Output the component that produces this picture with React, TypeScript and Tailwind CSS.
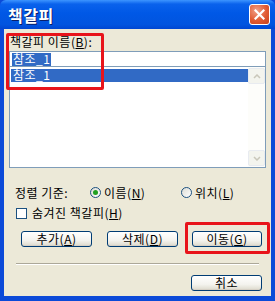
import React from 'react';

const font = { fontFamily: '"Noto Sans CJK KR", "Liberation Sans", sans-serif' };

const XpButton: React.FC<{ label: string; mnemonic?: string; className?: string }> = ({ label, mnemonic, className }) => (
  <div
    className={`h-[16px] flex items-center justify-center rounded-[3px] border border-[#003c74] bg-[linear-gradient(180deg,#ffffff_0%,#f4f3ee_60%,#dcd9cc_100%)] text-[12px] leading-none text-black shadow-[inset_0_-1px_0_#d6d0c5] ${className ?? ''}`}
  >
    {label}
    {mnemonic && (
      <>
        (<span className="underline">{mnemonic}</span>)
      </>
    )}
  </div>
);

const Radio: React.FC<{ checked?: boolean }> = ({ checked }) => (
  <div className="w-[11px] h-[11px] rounded-full border border-[#1c5180] bg-[linear-gradient(135deg,#dcdcd4,#ffffff)] flex items-center justify-center">
    {checked && <div className="w-[5px] h-[5px] rounded-full bg-[#21a121]" />}
  </div>
);

const ScrollArrow: React.FC<{ up?: boolean }> = ({ up }) => (
  <div className="h-[16px] w-full rounded-[2px] border border-[#e8ebf0] bg-[#f3f4ee] flex items-center justify-center">
    <svg width="8" height="5" viewBox="0 0 8 5">
      <path d={up ? 'M1 4 L4 1 L7 4' : 'M1 1 L4 4 L7 1'} fill="none" stroke="#c9c7ba" strokeWidth="1.5" />
    </svg>
  </div>
);

export default function App() {
  return (
    <div className="w-[275px] h-[301px] flex flex-col bg-[#0b4ad8] overflow-hidden" style={font}>
      {/* title bar */}
      <div className="h-[29px] shrink-0 flex items-center justify-between pl-[8px] pr-[5px] rounded-t-[6px] bg-[linear-gradient(180deg,#3d95ff_0%,#0a62ec_14%,#0058e6_45%,#0154df_85%,#0046d2_100%)]">
        <span className="text-white font-bold text-[16px] leading-none tracking-[0.5px] [text-shadow:1px_1px_0_#0a1e6a]">책갈피</span>
        <div className="w-[21px] h-[21px] rounded-[3px] border border-white bg-[radial-gradient(circle_at_35%_30%,#f0a088,#e15a32_55%,#c8411c)] flex items-center justify-center">
          <svg width="11" height="11" viewBox="0 0 11 11">
            <path d="M1.5 1.5 L9.5 9.5 M9.5 1.5 L1.5 9.5" stroke="#fff" strokeWidth="2.2" strokeLinecap="square" />
          </svg>
        </div>
      </div>

      {/* body */}
      <div className="relative flex-1 mx-[4px] mb-[5px] bg-[#ece9d8] flex flex-col text-[12px] leading-none tracking-[0.5px] text-black">
        <div className="pl-[6px] pt-[7px] h-[22px]">
          책갈피 이름(<span className="underline">B</span>):
        </div>
        <div className="mx-[5px] h-[16px] border border-[#7f9db9] bg-white flex items-center pl-[2px]">
          <span className="inline-block h-[13px] bg-[#316ac5] text-white px-[1px] leading-[11px]">참조_1</span>
        </div>
        <div className="mx-[5px] h-[101px] border border-[#7f9db9] border-t-0 bg-white flex">
          <div className="flex-1 pt-[2px] pl-[1px]">
            <div className="h-[13px] bg-[#316ac5] text-white pl-[2px] leading-[11px]">참조_1</div>
          </div>
          <div className="w-[17px] flex flex-col justify-between bg-[#fdfdfa] py-[1px]">
            <ScrollArrow up />
            <ScrollArrow />
          </div>
        </div>

        <div className="flex items-center mt-[18px] h-[13px] pl-[11px]">
          <span className="w-[75px]">정렬 기준:</span>
          <Radio checked />
          <span className="ml-[3px] w-[77px]">
            이름(<span className="underline">N</span>)
          </span>
          <Radio />
          <span className="ml-[3px]">
            위치(<span className="underline">L</span>)
          </span>
        </div>

        <div className="flex items-center mt-[8px] h-[12px] pl-[12px]">
          <div className="w-[11px] h-[11px] border border-[#1c5180] bg-white" />
          <span className="ml-[5px]">
            숨겨진 책갈피(<span className="underline">H</span>)
          </span>
        </div>

        <div className="flex items-center mt-[12px] pl-[17px]">
          <XpButton label="추가" mnemonic="A" className="w-[71px]" />
          <XpButton label="삭제" mnemonic="D" className="w-[71px] ml-[15px]" />
          <XpButton label="이동" mnemonic="G" className="w-[70px] ml-[14px]" />
        </div>

        <div className="mx-[12px] mt-[16px] h-[2px] border-t border-[#aca899] border-b border-b-white" />

        <div className="flex justify-end pr-[9px] mt-[10px]">
          <XpButton label="취소" className="w-[71px] h-[15px]" />
        </div>

        {/* annotation boxes */}
        <div className="absolute left-[2px] top-[4px] w-[98px] h-[57px] border-[3px] border-[#e8141b] rounded-[2px] pointer-events-none" />
        <div className="absolute left-[181px] top-[193px] w-[85px] h-[32px] border-[3px] border-[#e8141b] rounded-[2px] pointer-events-none" />
      </div>
    </div>
  );
}
